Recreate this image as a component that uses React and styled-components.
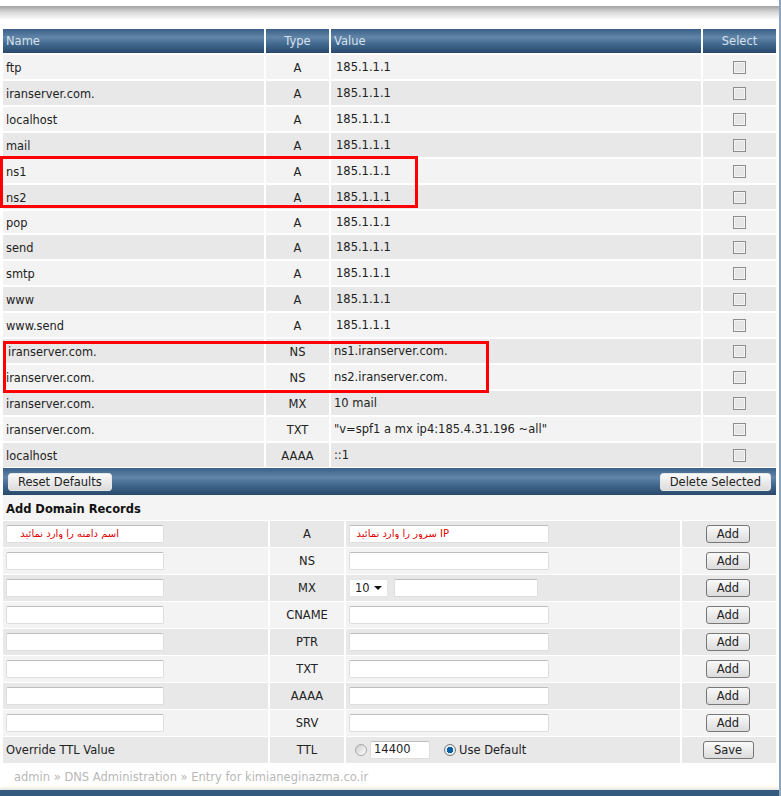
import React from 'react';
import styled, { createGlobalStyle } from 'styled-components';

const GlobalStyle = createGlobalStyle`
  html, body {
    margin: 0;
    padding: 0;
    background: #fff;
    font-family: "DejaVu Sans", Verdana, sans-serif;
    color: #222;
  }
`;

const records = [
  { name: 'ftp', type: 'A', value: '185.1.1.1' },
  { name: 'iranserver.com.', type: 'A', value: '185.1.1.1' },
  { name: 'localhost', type: 'A', value: '185.1.1.1' },
  { name: 'mail', type: 'A', value: '185.1.1.1' },
  { name: 'ns1', type: 'A', value: '185.1.1.1' },
  { name: 'ns2', type: 'A', value: '185.1.1.1' },
  { name: 'pop', type: 'A', value: '185.1.1.1', short: true },
  { name: 'send', type: 'A', value: '185.1.1.1' },
  { name: 'smtp', type: 'A', value: '185.1.1.1' },
  { name: 'www', type: 'A', value: '185.1.1.1' },
  { name: 'www.send', type: 'A', value: '185.1.1.1' },
  { name: 'iranserver.com.', type: 'NS', value: 'ns1.iranserver.com.', shifted: true },
  { name: 'iranserver.com.', type: 'NS', value: 'ns2.iranserver.com.' },
  { name: 'iranserver.com.', type: 'MX', value: '10 mail' },
  { name: 'iranserver.com.', type: 'TXT', value: '"v=spf1 a mx ip4:185.4.31.196 ~all"' },
  { name: 'localhost', type: 'AAAA', value: '::1' },
];

const addTypes = ['A', 'NS', 'MX', 'CNAME', 'PTR', 'TXT', 'AAAA', 'SRV'];

const barGradient = 'linear-gradient(#3a6088 0%, #6285a8 35%, #3f668c 65%, #29496b 100%)';

const Page = styled.div`
  position: relative;
  width: 781px;
  height: 796px;
  overflow: hidden;
  box-sizing: border-box;
  border-right: 2px solid #8ea6bd;
`;

const TopStrip = styled.div`
  height: 6px;
  background: #fff;
`;

const TopShade = styled.div`
  height: 14px;
  margin-bottom: 9px;
  background: linear-gradient(#a2a2a2 0%, #d9d9d9 45%, #fff 100%);
`;

const Content = styled.div`
  margin-left: 3px;
  width: 773px;
`;

const RecordTable = styled.div`
  display: grid;
  grid-template-columns: 261px 63px 370px 73px;
  column-gap: 2px;
  row-gap: 2px;
`;

const HeadCell = styled.div`
  height: 24px;
  line-height: 25px;
  padding: 0 3px;
  font-size: 11.5px;
  color: #d6e2ee;
  background: ${barGradient};
  text-align: ${(p) => (p.$center ? 'center' : 'left')};
`;

const Cell = styled.div`
  box-sizing: border-box;
  height: ${(p) => (p.$short ? '22px' : '24px')};
  display: flex;
  align-items: center;
  justify-content: ${(p) => (p.$center ? 'center' : 'flex-start')};
  padding: ${(p) => (p.$drop ? '1px' : '0')} 3px 0 ${(p) => p.$indent || 3}px;
  font-size: 11.5px;
  background: ${(p) => (p.$odd ? '#e8e8e8' : '#f3f3f3')};
`;

const NameText = styled.span`
  font-size: 11.4px;
`;

const Check = styled.span`
  width: 11px;
  height: 11px;
  margin-right: 1px;
  border: 1px solid #8d8d8d;
  background: #e6e6e6;
  box-shadow: inset 0 0 0 1px #f4f4f4;
`;

const ActionBar = styled.div`
  display: flex;
  justify-content: space-between;
  align-items: center;
  height: 27px;
  padding: 0 5px;
  margin-top: 1px;
  background: ${barGradient};
`;

const Button = styled.button`
  height: 18px;
  padding: 0 9px;
  font-family: inherit;
  font-size: 11.5px;
  line-height: 14px;
  color: #222;
  background: linear-gradient(#fafafa, #dcdcdc);
  border: 1px solid #e6e6e6;
  border-radius: 3px;
`;

const RowButton = styled(Button)`
  width: ${(p) => p.$w}px;
  margin-right: 2px;
  padding: 0;
  border-color: #777;
`;

const SectionTitle = styled.div`
  height: 25px;
  line-height: 28px;
  padding-left: 3px;
  margin-bottom: 1px;
  font-size: 11.5px;
  font-weight: bold;
  color: #111;
  background: #f4f4f4;
`;

const AddTable = styled.div`
  display: grid;
  grid-template-columns: 265px 74px 334px 94px;
  column-gap: 2px;
  row-gap: 1px;
`;

const AddCell = styled.div`
  height: 26px;
  display: flex;
  align-items: center;
  gap: ${(p) => p.$gap || 0}px;
  justify-content: ${(p) => (p.$center ? 'center' : 'flex-start')};
  padding: 0 3px;
  font-size: 11.5px;
  background: ${(p) => (p.$odd ? '#e8e8e8' : '#f3f3f3')};
`;

const Field = styled.input`
  box-sizing: border-box;
  width: ${(p) => p.$w}px;
  height: 18px;
  margin: 0;
  padding: 0 ${(p) => p.$start || 3}px 2px 3px;
  font-family: inherit;
  font-size: ${(p) => (p.$note ? '10px' : '11.5px')};
  color: ${(p) => (p.$note ? '#e00000' : '#222')};
  background: #fff;
  border: 1px solid #dedede;
  border-top-color: #bdbdbd;
  border-radius: 2px;
  outline: none;
`;

const SelectBox = styled.div`
  box-sizing: border-box;
  width: 39px;
  height: 18px;
  margin-right: 6px;
  padding: 0 5px;
  display: flex;
  align-items: center;
  justify-content: space-between;
  background: #fff;
  border: 1px solid #e6e6e6;
  font-size: 11.5px;
`;

const Caret = styled.span`
  width: 0;
  height: 0;
  border-left: 4px solid transparent;
  border-right: 4px solid transparent;
  border-top: 4px solid #111;
`;

const Radio = styled.span`
  box-sizing: border-box;
  flex: none;
  width: 12px;
  height: 12px;
  margin-left: ${(p) => p.$ml}px;
  margin-bottom: 1px;
  border-radius: 50%;
  border: 1px solid ${(p) => (p.$on ? '#777' : '#aaa')};
  background: ${(p) => (p.$on ? 'radial-gradient(circle, #0b5fa8 0 3px, #e8eef3 3.5px)' : 'linear-gradient(135deg, #ccc, #fff)')};
`;

const Crumbs = styled.div`
  padding: 7px 0 0 11px;
  font-size: 11.5px;
  color: #b8b8b8;
`;

const BottomBar = styled.div`
  position: absolute;
  left: 0;
  right: 0;
  bottom: 0;
  height: 6px;
  background: #345a80;
  box-shadow: 0 -2px 3px #e6e4dc;
`;

const Highlight = styled.div`
  position: absolute;
  box-sizing: border-box;
  left: ${(p) => p.$x}px;
  top: ${(p) => p.$y}px;
  width: ${(p) => p.$w}px;
  height: ${(p) => p.$h}px;
  border: 3px solid #ff0000;
`;

export default function App() {
  return (
    <Page>
      <GlobalStyle />
      <TopStrip />
      <TopShade />
      <Content>
        <RecordTable>
          <HeadCell>Name</HeadCell>
          <HeadCell $center>Type</HeadCell>
          <HeadCell>Value</HeadCell>
          <HeadCell $center>Select</HeadCell>
          {records.map((r, i) => {
            const odd = i % 2 === 1;
            return (
              <React.Fragment key={i}>
                <Cell $odd={odd} $short={r.short} $drop $indent={r.shifted ? 5 : 3}>
                  <NameText>{r.name}</NameText>
                </Cell>
                <Cell $odd={odd} $short={r.short} $drop $center>{r.type}</Cell>
                <Cell $odd={odd} $short={r.short} $indent={r.type === 'A' ? 5 : 3}>{r.value}</Cell>
                <Cell $odd={odd} $short={r.short} $center><Check /></Cell>
              </React.Fragment>
            );
          })}
        </RecordTable>
        <ActionBar>
          <Button>Reset Defaults</Button>
          <Button>Delete Selected</Button>
        </ActionBar>
        <SectionTitle>Add Domain Records</SectionTitle>
        <AddTable>
          {addTypes.map((t, i) => {
            const odd = i % 2 === 0;
            const first = i === 0;
            return (
              <React.Fragment key={t}>
                <AddCell $odd={odd}>
                  {first ? (
                    <Field $w={158} $note $start={44} dir="rtl" defaultValue="اسم دامنه را وارد نمائید" />
                  ) : (
                    <Field $w={158} />
                  )}
                </AddCell>
                <AddCell $odd={odd} $center>{t}</AddCell>
                <AddCell $odd={odd}>
                  {t === 'MX' ? (
                    <>
                      <SelectBox>10<Caret /></SelectBox>
                      <Field $w={144} />
                    </>
                  ) : first ? (
                    <Field $w={200} $note $start={99} dir="rtl" defaultValue="IP سرور را وارد نمائید" />
                  ) : (
                    <Field $w={200} />
                  )}
                </AddCell>
                <AddCell $odd={odd} $center><RowButton $w={44}>Add</RowButton></AddCell>
              </React.Fragment>
            );
          })}
          <AddCell $odd>Override TTL Value</AddCell>
          <AddCell $odd $center>TTL</AddCell>
          <AddCell $odd $gap={3}>
            <Radio $ml={6} />
            <Field $w={60} defaultValue="14400" />
            <Radio $on $ml={11} />
            Use Default
          </AddCell>
          <AddCell $odd $center><RowButton $w={51}>Save</RowButton></AddCell>
        </AddTable>
        <Crumbs>admin » DNS Administration » Entry for kimianeginazma.co.ir</Crumbs>
      </Content>
      <BottomBar />
      <Highlight $x={0} $y={156} $w={418} $h={52} />
      <Highlight $x={3} $y={341} $w={486} $h={52} />
    </Page>
  );
}
